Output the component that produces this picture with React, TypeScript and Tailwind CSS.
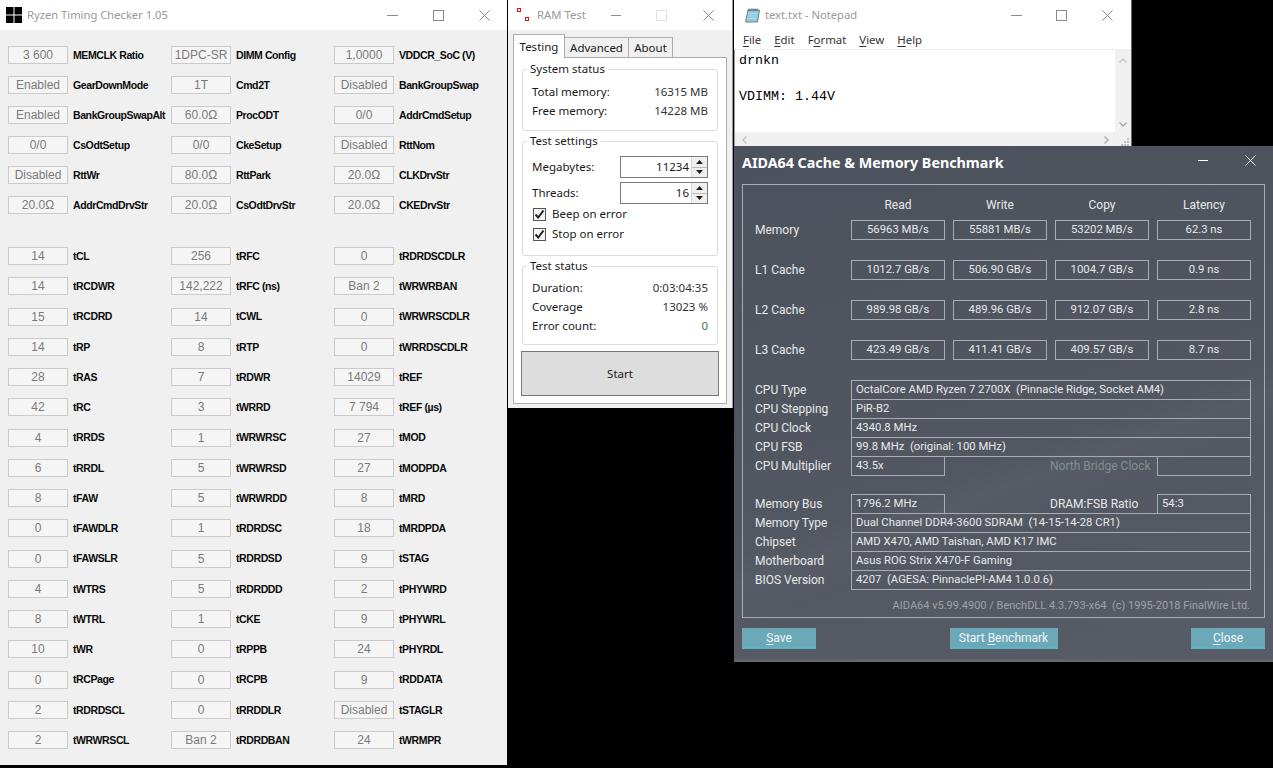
import React from 'react';

// [value, label] triples, one line per row of the timing checker
type Cell = [string, string];

const TOP_ROWS: Cell[][] = [
  [['3 600', 'MEMCLK Ratio'], ['1DPC-SR', 'DIMM Config'], ['1,0000', 'VDDCR_SoC (V)']],
  [['Enabled', 'GearDownMode'], ['1T', 'Cmd2T'], ['Disabled', 'BankGroupSwap']],
  [['Enabled', 'BankGroupSwapAlt'], ['60.0Ω', 'ProcODT'], ['0/0', 'AddrCmdSetup']],
  [['0/0', 'CsOdtSetup'], ['0/0', 'CkeSetup'], ['Disabled', 'RttNom']],
  [['Disabled', 'RttWr'], ['80.0Ω', 'RttPark'], ['20.0Ω', 'CLKDrvStr']],
  [['20.0Ω', 'AddrCmdDrvStr'], ['20.0Ω', 'CsOdtDrvStr'], ['20.0Ω', 'CKEDrvStr']],
];

const TIMING_ROWS: Cell[][] = [
  [['14', 'tCL'], ['256', 'tRFC'], ['0', 'tRDRDSCDLR']],
  [['14', 'tRCDWR'], ['142,222', 'tRFC (ns)'], ['Ban 2', 'tWRWRBAN']],
  [['15', 'tRCDRD'], ['14', 'tCWL'], ['0', 'tWRWRSCDLR']],
  [['14', 'tRP'], ['8', 'tRTP'], ['0', 'tWRRDSCDLR']],
  [['28', 'tRAS'], ['7', 'tRDWR'], ['14029', 'tREF']],
  [['42', 'tRC'], ['3', 'tWRRD'], ['7 794', 'tREF (µs)']],
  [['4', 'tRRDS'], ['1', 'tWRWRSC'], ['27', 'tMOD']],
  [['6', 'tRRDL'], ['5', 'tWRWRSD'], ['27', 'tMODPDA']],
  [['8', 'tFAW'], ['5', 'tWRWRDD'], ['8', 'tMRD']],
  [['0', 'tFAWDLR'], ['1', 'tRDRDSC'], ['18', 'tMRDPDA']],
  [['0', 'tFAWSLR'], ['5', 'tRDRDSD'], ['9', 'tSTAG']],
  [['4', 'tWTRS'], ['5', 'tRDRDDD'], ['2', 'tPHYWRD']],
  [['8', 'tWTRL'], ['1', 'tCKE'], ['9', 'tPHYWRL']],
  [['10', 'tWR'], ['0', 'tRPPB'], ['24', 'tPHYRDL']],
  [['0', 'tRCPage'], ['0', 'tRCPB'], ['9', 'tRDDATA']],
  [['2', 'tRDRDSCL'], ['0', 'tRRDDLR'], ['Disabled', 'tSTAGLR']],
  [['2', 'tWRWRSCL'], ['Ban 2', 'tRDRDBAN'], ['24', 'tWRMPR']],
];

const BENCH_ROWS = [
  ['Memory', '56963 MB/s', '55881 MB/s', '53202 MB/s', '62.3 ns'],
  ['L1 Cache', '1012.7 GB/s', '506.90 GB/s', '1004.7 GB/s', '0.9 ns'],
  ['L2 Cache', '989.98 GB/s', '489.96 GB/s', '912.07 GB/s', '2.8 ns'],
  ['L3 Cache', '423.49 GB/s', '411.41 GB/s', '409.57 GB/s', '8.7 ns'],
];

const Caption = ({ color, square, squareColor }: { color: string; square: number; squareColor?: string }) => (
  <svg width="11" height="11" viewBox="0 0 11 11" className="block" style={{ marginLeft: square }}>
    <rect x="0.5" y="0.5" width="10" height="10" fill="none" stroke={squareColor ?? color} />
  </svg>
);

const CloseIcon = ({ color }: { color: string }) => (
  <svg width="11" height="11" viewBox="0 0 11 11" className="block">
    <path d="M0.5 0.5L10.5 10.5M10.5 0.5L0.5 10.5" stroke={color} strokeWidth="1" fill="none" />
  </svg>
);

const TimingRow = ({ cells, tall }: { cells: Cell[]; tall?: boolean }) => (
  <div className={`flex items-center ${tall ? 'h-[30.25px]' : 'h-[30px]'}`}>
    {cells.map(([value, label]) => (
      <div key={label} className="flex w-[163px] shrink-0 items-center">
        <div className="flex h-[18px] w-[60px] shrink-0 items-center justify-center border border-[#cbcbcb] bg-[#f5f5f5] font-['Liberation_Sans'] text-[12px] text-[#7a7a7a]">
          {value}
        </div>
        <span className="ml-[5px] pt-px font-['Liberation_Sans'] text-[10.5px] font-bold tracking-[-0.4px] whitespace-nowrap text-[#0a0a0a]">{label}</span>
      </div>
    ))}
  </div>
);

const RyzenWindow = () => (
  <div className="absolute top-0 left-0 h-[765px] w-[507px] bg-[#f0f0f0]">
    <div className="flex h-[30px] items-center bg-white pl-[6px] font-['Noto_Sans'] text-[11.2px] text-[#999999]">
      <svg width="16" height="16" viewBox="0 0 16 16" className="shrink-0">
        <rect width="16" height="16" fill="#000" />
        <path d="M8 0V16M0 8H16" stroke="#fff" strokeWidth="1" />
      </svg>
      <span className="ml-[5px]">Ryzen Timing Checker 1.05</span>
      <div className="ml-auto flex items-center pr-[17px]">
        <div className="h-px w-[11px] bg-[#8a8a8a]" />
        <Caption color="#8a8a8a" square={35} />
        <div className="ml-[35px]"><CloseIcon color="#8a8a8a" /></div>
      </div>
    </div>
    <div className="pt-[10px] pl-[8px]">
      {TOP_ROWS.map((cells) => <TimingRow key={cells[0][1]} cells={cells} />)}
      <div className="h-[21px]" />
      {TIMING_ROWS.map((cells) => <TimingRow key={cells[0][1]} cells={cells} tall />)}
    </div>
  </div>
);

const Group = ({ title, className, children }: { title: string; className: string; children: React.ReactNode }) => (
  <fieldset className={`rounded-[3px] border border-[#dcdcdc] px-[9px] ${className}`}>
    <legend className="-ml-[5px] px-[3px] text-[11.5px] leading-[14px] text-[#1a1a1a]">{title}</legend>
    {children}
  </fieldset>
);

const StatRow = ({ label, value, valueClass }: { label: string; value: string; valueClass?: string }) => (
  <div className="flex h-[19px] items-center justify-between">
    <span>{label}</span>
    <span className={valueClass ?? 'text-[#333333]'}>{value}</span>
  </div>
);

const Spinner = ({ value, className }: { value: string; className: string }) => (
  <div className={`flex items-center ${className}`}>
    <span className="w-[88px]">{value === '11234' ? 'Megabytes:' : 'Threads:'}</span>
    <div className="flex h-[22px] w-[88px] items-center border border-[#7a7a7a] bg-white">
      <span className="flex-1 pr-[2px] text-right">{value}</span>
      <div className="flex h-full w-[16px] flex-col border-l border-[#d8d8d8] bg-[#f0f0f0]">
        <div className="flex flex-1 items-center justify-center border-b border-[#bdbdbd]">
          <svg width="7" height="4" viewBox="0 0 7 4"><path d="M3.5 0L7 4H0Z" fill="#222" /></svg>
        </div>
        <div className="flex flex-1 items-center justify-center">
          <svg width="7" height="4" viewBox="0 0 7 4"><path d="M0 0H7L3.5 4Z" fill="#222" /></svg>
        </div>
      </div>
    </div>
  </div>
);

const Check = ({ label, className }: { label: string; className?: string }) => (
  <div className={`flex h-[20px] items-center pl-px ${className ?? ''}`}>
    <div className="flex h-[13px] w-[13px] items-center justify-center border border-[#555555] bg-[#f4f4f4]">
      <svg width="11" height="11" viewBox="0 0 11 11"><path d="M1.5 5.5L4.2 8.5L9.5 1.5" fill="none" stroke="#222" strokeWidth="2" /></svg>
    </div>
    <span className="ml-[6px]">{label}</span>
  </div>
);

const RamTestWindow = () => (
  <div className="absolute top-0 left-[508px] h-[408px] w-[225px] border-r border-[#9a9a9a] bg-[#f0f0f0] font-['Noto_Sans'] text-[11.5px] text-[#1a1a1a]">
    <div className="flex h-[30px] items-center bg-white pl-[9px] text-[11.3px] text-[#999999]">
      <svg width="12" height="14" viewBox="0 0 12 14" className="shrink-0">
        <rect x="0.5" y="0.5" width="3" height="3" fill="#fff" stroke="#e01010" />
        <rect x="8.5" y="9.5" width="3" height="3" fill="#fff" stroke="#e01010" />
      </svg>
      <span className="ml-[8px]">RAM Test</span>
      <div className="ml-auto flex items-center pr-[18px]">
        <div className="h-px w-[10px] bg-[#8a8a8a]" />
        <Caption color="#8a8a8a" squareColor="#e3e3e3" square={35} />
        <div className="ml-[36px]"><CloseIcon color="#8a8a8a" /></div>
      </div>
    </div>
    <div className="flex h-[27px] items-end pl-[5px]">
      <div className="relative z-10 -mb-px flex h-[24px] w-[52px] items-center justify-center border border-b-0 border-[#adadad] bg-white">Testing</div>
      <div className="flex h-[20px] w-[64px] items-center justify-center border border-b-0 border-l-0 border-[#adadad]">Advanced</div>
      <div className="flex h-[20px] w-[44px] items-center justify-center border border-b-0 border-l-0 border-[#adadad]">About</div>
    </div>
    <div className="ml-[5px] h-[347px] w-[214px] border border-[#adadad] bg-white px-[8px] pt-[4px]">
      <Group title="System status" className="h-[69px]">
        <div className="pt-[6px]">
          <StatRow label="Total memory:" value="16315 MB" />
          <StatRow label="Free memory:" value="14228 MB" />
        </div>
      </Group>
      <Group title="Test settings" className="mt-[3px] h-[122px]">
        <Spinner value="11234" className="mt-[8px]" />
        <Spinner value="16" className="mt-[4px]" />
        <Check label="Beep on error" />
        <Check label="Stop on error" />
      </Group>
      <Group title="Test status" className="mt-[3px] h-[86px]">
        <div className="pt-[5px]">
          <StatRow label="Duration:" value="0:03:04:35" />
          <StatRow label="Coverage" value="13023 %" />
          <StatRow label="Error count:" value="0" valueClass="text-[#2e8b2e]" />
        </div>
      </Group>
      <div className="-mx-px mt-[6px] flex h-[45px] items-center justify-center border border-[#777777] bg-[#dddddd]">Start</div>
    </div>
  </div>
);

const Mnemonic = ({ before = '', letter, after }: { before?: string; letter: string; after: string }) => (
  <span>{before}<span className="underline underline-offset-2">{letter}</span>{after}</span>
);

const NotepadWindow = () => (
  <div className="absolute top-0 left-[734px] h-[146px] w-[398px] border-r border-[#6a6a6a] bg-white font-['Noto_Sans'] text-[11.4px]">
    <div className="flex h-[30px] items-center pl-[10px] text-[11.2px] text-[#999999]">
      <svg width="16" height="16" viewBox="0 0 16 16" className="shrink-0">
        <path d="M4 3H15.5L13.5 15H1.5Z" fill="#8fc6e2" stroke="#6b8a78" />
        <path d="M4 6.5H13.5M3.5 9H13M3 11.5H12.5" stroke="#b5def2" />
        <path d="M5 1.5V4M7 1.5V4M9 1.5V4M11 1.5V4M13 1.5V4" stroke="#555" />
      </svg>
      <span className="ml-[5px]">text.txt - Notepad</span>
      <div className="ml-auto flex items-center pr-[18px]">
        <div className="h-px w-[11px] bg-[#8a8a8a]" />
        <Caption color="#8a8a8a" square={34} />
        <div className="ml-[35px]"><CloseIcon color="#8a8a8a" /></div>
      </div>
    </div>
    <div className="flex h-[19px] items-center gap-[13px] pl-[9px] text-[#333333]">
      <Mnemonic letter="F" after="ile" />
      <Mnemonic letter="E" after="dit" />
      <Mnemonic before="F" letter="o" after="rmat" />
      <Mnemonic letter="V" after="iew" />
      <Mnemonic letter="H" after="elp" />
    </div>
    <div className="relative h-[97px] border-t border-l border-[#f0f0f0] border-l-[#a0a0a0] bg-[#f0f0f0]">
      <div className="mr-[16px] h-[82px] bg-white pt-[2px] pl-[4px] font-['Liberation_Mono'] text-[13.33px] leading-[18px] text-black">
        <div>drnkn</div>
        <div>&nbsp;</div>
        <div>VDIMM: 1.44V</div>
      </div>
      <svg width="8" height="5" viewBox="0 0 8 5" className="absolute top-[8px] right-[4px]"><path d="M0.5 4.5L4 1L7.5 4.5" fill="none" stroke="#c4c4c4" strokeWidth="1.4" /></svg>
      <svg width="8" height="5" viewBox="0 0 8 5" className="absolute top-[72px] right-[4px]"><path d="M0.5 0.5L4 4L7.5 0.5" fill="none" stroke="#a8a8a8" strokeWidth="1.4" /></svg>
      <svg width="5" height="8" viewBox="0 0 5 8" className="absolute top-[86px] left-[7px]"><path d="M4.5 0.5L1 4L4.5 7.5" fill="none" stroke="#c4c4c4" strokeWidth="1.4" /></svg>
      <svg width="5" height="8" viewBox="0 0 5 8" className="absolute top-[86px] right-[22px]"><path d="M0.5 0.5L4 4L0.5 7.5" fill="none" stroke="#a8a8a8" strokeWidth="1.4" /></svg>
      <svg width="8" height="8" viewBox="0 0 8 8" className="absolute right-[2px] bottom-0" fill="#bdbdbd">
        <rect x="6" y="0" width="2" height="2" /><rect x="3" y="3" width="2" height="2" /><rect x="6" y="3" width="2" height="2" />
        <rect x="0" y="6" width="2" height="2" /><rect x="3" y="6" width="2" height="2" /><rect x="6" y="6" width="2" height="2" />
      </svg>
    </div>
  </div>
);

const boxClass = 'flex h-[20px] items-center border border-[#a9acb2] text-[11.3px]';

const BenchRow = ({ row, first }: { row: string[]; first?: boolean }) => (
  <div className={`flex items-center ${first ? 'mt-[5px]' : 'mt-[20px]'}`}>
    <span className="w-[96px] shrink-0">{row[0]}</span>
    <div className="flex gap-[8px]">
      {row.slice(1).map((cell, i) => (
        <div key={i} className={`${boxClass} w-[94px] justify-center`}>{cell}</div>
      ))}
    </div>
  </div>
);

const InfoRow = ({ label, children, first }: { label: string; children: React.ReactNode; first?: boolean }) => (
  <div className={`flex items-center ${first ? '' : '-mt-px'}`}>
    <span className="w-[96px] shrink-0">{label}</span>
    {children}
  </div>
);

const Wide = ({ text }: { text: string }) => (
  <div className={`${boxClass} w-[400px] pl-[4px] whitespace-pre`}>{text}</div>
);

const SplitRow = ({ left, middle, right, dim }: { left: string; middle: string; right: string; dim?: boolean }) => (
  <div className="flex w-[400px] items-center">
    <div className={`${boxClass} w-[94px] shrink-0 pl-[4px]`}>{left}</div>
    <span className={`ml-[105px] w-[107px] whitespace-nowrap ${dim ? 'text-[#7f9090]' : ''}`}>{middle}</span>
    <div className={`${boxClass} w-[94px] shrink-0 pl-[4px]`}>{right}</div>
  </div>
);

const AidaButton = ({ width, before = '', letter, after }: { width: string; before?: string; letter: string; after: string }) => (
  <div className={`flex h-[21px] items-center justify-center border-b-2 border-[#5fb4c4] bg-[#6ca9b8] text-[#f2f6f7] ${width}`}>
    <Mnemonic before={before} letter={letter} after={after} />
  </div>
);

const AidaWindow = () => (
  <div className="absolute top-[146px] left-[734px] h-[516px] w-[539px] border-b-[3px] border-[#5f6672] bg-[linear-gradient(160deg,transparent_58%,rgba(255,255,255,0.025)_62%,transparent_68%),linear-gradient(165deg,#4c525d_0%,#50555f_45%,#585c67_100%)] font-['Roboto'] text-[12px] text-[#e8e9eb]">
    <div className="flex h-[38px] items-start px-[8px] pt-[6px]">
      <span className="font-['Noto_Sans'] text-[14.3px] font-bold text-white">AIDA64 Cache &amp; Memory Benchmark</span>
      <div className="ml-auto flex items-center pt-[3px] pr-[9px]">
        <div className="h-px w-[10px] bg-white" />
        <div className="ml-[37px]"><CloseIcon color="#ffffff" /></div>
      </div>
    </div>
    <div className="mx-[8px] h-[434px] border border-[#a9acb2] pt-[10px] pl-[12px]">
      <div className="flex h-[20px] items-center">
        <div className="w-[96px] shrink-0" />
        <div className="flex gap-[8px]">
          {['Read', 'Write', 'Copy', 'Latency'].map((h) => (
            <div key={h} className="w-[94px] text-center">{h}</div>
          ))}
        </div>
      </div>
      {BENCH_ROWS.map((row, i) => <BenchRow key={row[0]} row={row} first={i === 0} />)}
      <div className="mt-[20px]">
        <InfoRow label="CPU Type" first><Wide text="OctalCore AMD Ryzen 7 2700X  (Pinnacle Ridge, Socket AM4)" /></InfoRow>
        <InfoRow label="CPU Stepping"><Wide text="PiR-B2" /></InfoRow>
        <InfoRow label="CPU Clock"><Wide text="4340.8 MHz" /></InfoRow>
        <InfoRow label="CPU FSB"><Wide text="99.8 MHz  (original: 100 MHz)" /></InfoRow>
        <InfoRow label="CPU Multiplier"><SplitRow left="43.5x" middle="North Bridge Clock" right="" dim /></InfoRow>
      </div>
      <div className="mt-[18px]">
        <InfoRow label="Memory Bus" first><SplitRow left="1796.2 MHz" middle="DRAM:FSB Ratio" right="54:3" /></InfoRow>
        <InfoRow label="Memory Type"><Wide text="Dual Channel DDR4-3600 SDRAM  (14-15-14-28 CR1)" /></InfoRow>
        <InfoRow label="Chipset"><Wide text="AMD X470, AMD Taishan, AMD K17 IMC" /></InfoRow>
        <InfoRow label="Motherboard"><Wide text="Asus ROG Strix X470-F Gaming" /></InfoRow>
        <InfoRow label="BIOS Version"><Wide text="4207  (AGESA: PinnaclePI-AM4 1.0.0.6)" /></InfoRow>
      </div>
      <div className="mt-[8px] pr-[14px] text-right text-[11px] whitespace-pre text-[#9ea1a7]">AIDA64 v5.99.4900 / BenchDLL 4.3.793-x64  (c) 1995-2018 FinalWire Ltd.</div>
    </div>
    <div className="mx-[8px] mt-[10px] flex justify-between">
      <AidaButton width="w-[74px]" letter="S" after="ave" />
      <AidaButton width="w-[108px]" before="Start " letter="B" after="enchmark" />
      <AidaButton width="w-[74px]" letter="C" after="lose" />
    </div>
  </div>
);

export default function App() {
  return (
    <div className="relative h-[768px] w-[1273px] overflow-hidden bg-black">
      <RyzenWindow />
      <RamTestWindow />
      <NotepadWindow />
      <AidaWindow />
    </div>
  );
}
